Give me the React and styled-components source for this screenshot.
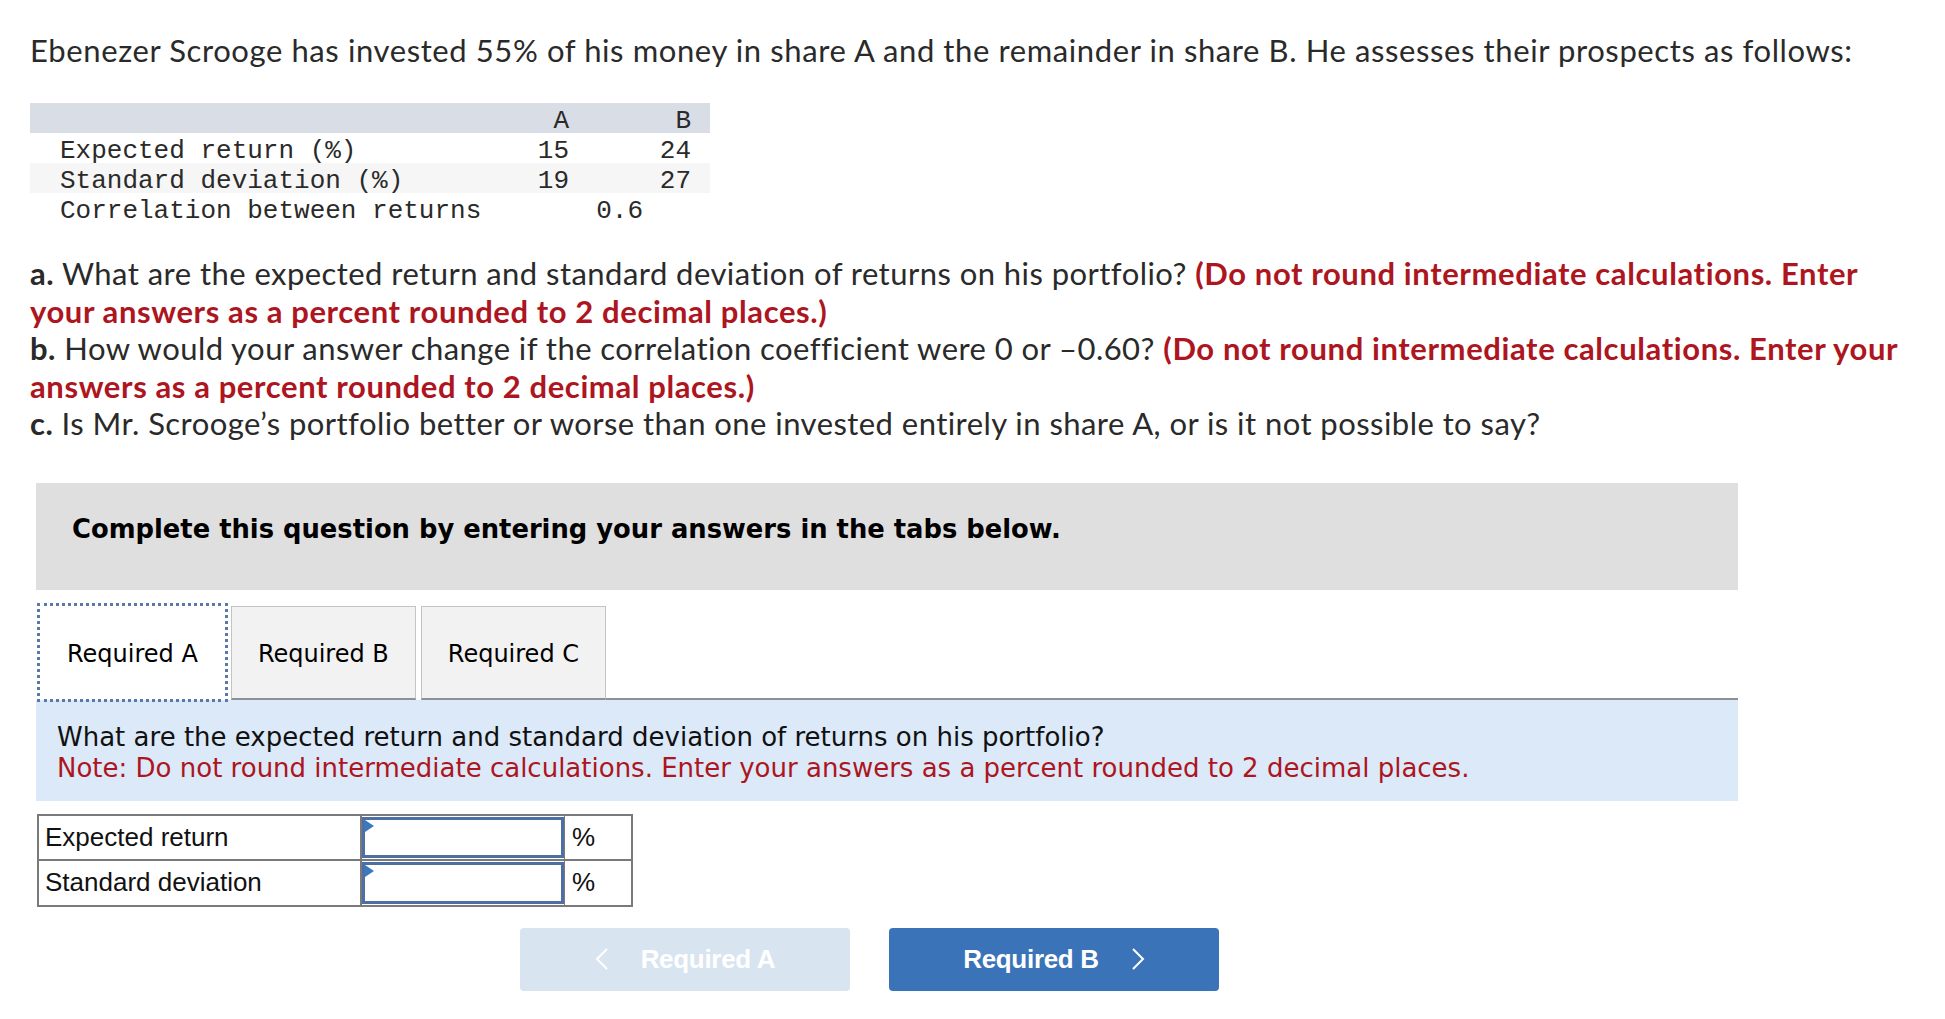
import styled, { createGlobalStyle } from 'styled-components';

const GlobalStyle = createGlobalStyle`
    body {
        margin: 0;
        background: #ffffff;
        color: #2a2a2a;
        font-family: 'Lato', 'Liberation Sans', sans-serif;
    }
`

const RED = '#ad1520';

const rows = [
    { label: 'Expected return (%)', a: '15', b: '24', shaded: false },
    { label: 'Standard deviation (%)', a: '19', b: '27', shaded: true },
];

const answers = ['Expected return', 'Standard deviation'];

export default function App() {
    return (
        <>
            <GlobalStyle />
            <Page>
                <Intro>
                    Ebenezer Scrooge has invested 55% of his money in share A and the remainder in share B. He assesses their prospects as follows:
                </Intro>

                <DataTable>
                    <DataRow $head>
                        <LabelCell />
                        <NumCell>A</NumCell>
                        <NumCell $last>B</NumCell>
                    </DataRow>
                    {rows.map((r) => (
                        <DataRow key={r.label} $shaded={r.shaded}>
                            <LabelCell>{r.label}</LabelCell>
                            <NumCell>{r.a}</NumCell>
                            <NumCell $last>{r.b}</NumCell>
                        </DataRow>
                    ))}
                    <DataRow>
                        <LabelCell>Correlation between returns</LabelCell>
                        <SpanCell>0.6</SpanCell>
                    </DataRow>
                </DataTable>

                <Questions>
                    <Question>
                        <b>a.</b> What are the expected return and standard deviation of returns on his portfolio?{' '}
                        <Hint>(Do not round intermediate calculations. Enter your answers as a percent rounded to 2 decimal places.)</Hint>
                    </Question>
                    <Question>
                        <b>b.</b> How would your answer change if the correlation coefficient were 0 or –0.60?{' '}
                        <Hint>(Do not round intermediate calculations. Enter your answers as a percent rounded to 2 decimal places.)</Hint>
                    </Question>
                    <Question>
                        <b>c.</b> Is Mr. Scrooge’s portfolio better or worse than one invested entirely in share A, or is it not possible to say?
                    </Question>
                </Questions>

                <Panel>
                    <Instruction>Complete this question by entering your answers in the tabs below.</Instruction>

                    <TabList>
                        <Tab $active>Required A</Tab>
                        <Tab>Required B</Tab>
                        <Tab>Required C</Tab>
                        <TabFiller />
                    </TabList>

                    <Prompt>
                        <div>What are the expected return and standard deviation of returns on his portfolio?</div>
                        <Note>Note: Do not round intermediate calculations. Enter your answers as a percent rounded to 2 decimal places.</Note>
                    </Prompt>

                    <AnswerTable>
                        {answers.map((a, i) => (
                            <AnswerRow key={a} $first={i === 0}>
                                <AnswerLabel>{a}</AnswerLabel>
                                <InputCell>
                                    <InputBox />
                                    <Flag />
                                </InputCell>
                                <Unit>%</Unit>
                            </AnswerRow>
                        ))}
                    </AnswerTable>

                    <NavRow>
                        <NavButton $disabled>
                            <Chevron viewBox="0 0 14 24"><polyline points="12,2 2,12 12,22" /></Chevron>
                            Required A
                        </NavButton>
                        <NavButton>
                            Required B
                            <Chevron viewBox="0 0 14 24"><polyline points="2,2 12,12 2,22" /></Chevron>
                        </NavButton>
                    </NavRow>
                </Panel>
            </Page>
        </>
    );
}

const Page = styled.div`
    padding: 32px 30px 0 30px;
    width: 1945px;
    box-sizing: border-box;
`

const Intro = styled.p`
    margin: 0;
    font-size: 31px;
    letter-spacing: 0.6px;
    line-height: 36px;
`

const DataTable = styled.div`
    margin-top: 35px;
    width: 680px;
    font-family: 'Liberation Mono', monospace;
    font-size: 26px;
    color: #2a2a2a;
`

const DataRow = styled.div`
    display: grid;
    grid-template-columns: minmax(0, 1fr) 120px 141px;
    height: 30px;
    line-height: 30px;
    background: ${p => p.$head ? '#d9dde6' : p.$shaded ? '#f6f6f6' : 'transparent'};

    & > div {
        padding-top: 3px;
    }
`

const LabelCell = styled.div`
    padding-left: 30px;
    white-space: pre;
`

const NumCell = styled.div`
    text-align: right;
    padding-right: ${p => p.$last ? '19px' : '0'};
`

const SpanCell = styled.div`
    grid-column: 2 / 4;
    text-align: right;
    padding-right: 67px;
`

const Questions = styled.div`
    margin-top: 32px;
    font-size: 31px;
    letter-spacing: 0.45px;
    line-height: 37.5px;
`

const Question = styled.p`
    margin: 0;
    b { font-weight: 700; }
`

const Hint = styled.strong`
    color: ${RED};
    font-weight: 700;
    letter-spacing: 0.6px;
`

const Panel = styled.div`
    margin: 40px 0 0 6px;
    width: 1702px;
`

const Instruction = styled.div`
    height: 107px;
    box-sizing: border-box;
    padding: 0 0 14px 36px;
    display: flex;
    align-items: center;
    background: #dfdfdf;
    font-family: 'DejaVu Sans', Verdana, sans-serif;
    font-weight: 700;
    font-size: 25.8px;
    color: #000;
`

const TabList = styled.div`
    margin-top: 15px;
    display: flex;
    align-items: flex-end;
    height: 95px;
`

const Tab = styled.div`
    box-sizing: border-box;
    height: ${p => p.$active ? '95px' : '94px'};
    padding: 3px ${p => p.$active ? '28px' : '26px'} 0;
    margin-left: ${p => p.$active ? '3px' : '5px'};
    display: flex;
    align-items: center;
    font-family: 'DejaVu Sans', Verdana, sans-serif;
    font-size: 24px;
    color: #000;
    background: ${p => p.$active ? '#ffffff' : '#f2f2f2'};
    border: ${p => p.$active ? 'none' : '1px solid #c4c4c4'};
    border-bottom: ${p => p.$active ? 'none' : '2px solid #8c9196'};
    outline: ${p => p.$active ? '3px dotted #5a78aa' : 'none'};
    outline-offset: -1px;
`

const TabFiller = styled.div`
    flex: 1;
    border-bottom: 2px solid #8c9196;
`

const Prompt = styled.div`
    background: #dbe9f8;
    padding: 22px 21px 17px;
    font-family: 'DejaVu Sans', Verdana, sans-serif;
    font-size: 26px;
    line-height: 31px;
    color: #111;
`

const Note = styled.div`
    color: ${RED};
`

const AnswerTable = styled.div`
    margin: 13px 0 0 1px;
    width: 596px;
    border: 2px solid #7a7a7a;
    box-sizing: border-box;
    font-family: 'Liberation Sans', Arial, sans-serif;
    font-size: 26px;
    color: #111;
`

const AnswerRow = styled.div`
    display: grid;
    grid-template-columns: 323px 202px 1fr;
    height: 43.5px;
    border-top: ${p => p.$first ? 'none' : '2px solid #7a7a7a'};
`

const AnswerLabel = styled.div`
    display: flex;
    align-items: center;
    padding-left: 6px;
    border-right: 2px solid #7a7a7a;
`

const InputCell = styled.div`
    position: relative;
    padding: 1px 0;
`

const InputBox = styled.div`
    box-sizing: border-box;
    height: 100%;
    border: 3px solid #4d6fa3;
    background: #fff;
`

const Flag = styled.span`
    position: absolute;
    left: 3px;
    top: 4px;
    width: 0;
    height: 0;
    border-top: 6px solid transparent;
    border-bottom: 6px solid transparent;
    border-left: 9px solid #3a78c2;
`

const Unit = styled.div`
    display: flex;
    align-items: center;
    padding-left: 7px;
    border-left: 1px solid #7a7a7a;
`

const NavRow = styled.div`
    margin: 21px 0 0 484px;
    display: flex;
    gap: 39px;
`

const NavButton = styled.div`
    width: 330px;
    height: 63px;
    border-radius: 4px;
    display: flex;
    align-items: center;
    justify-content: center;
    gap: 32px;
    background: ${p => p.$disabled ? '#d9e4f1' : '#3b73b9'};
    color: #fff;
    font-family: 'Liberation Sans', Arial, sans-serif;
    font-weight: 700;
    font-size: 26px;
    letter-spacing: -0.3px;
`

const Chevron = styled.svg`
    width: 14px;
    height: 24px;
    fill: none;
    stroke: #fff;
    stroke-width: 2;
`
